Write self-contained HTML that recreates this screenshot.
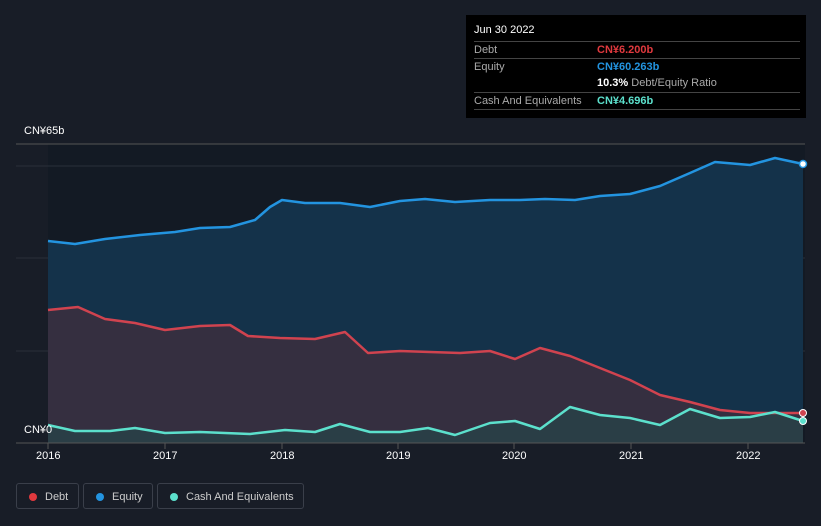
<!DOCTYPE html><html><head><meta charset="utf-8"><style>
body{margin:0;width:821px;height:526px;background:#181d27;font-family:"Liberation Sans",sans-serif;overflow:hidden;position:relative}
.t{position:absolute;font-size:11px;color:#fff}
.tip{position:absolute;left:466px;top:15px;width:340px;height:103px;background:#000;}
.tip .r{position:absolute;left:8px;width:326px;border-top:1px solid #444;height:17px;font-size:11px;color:#aaa;line-height:17px}
.leg{position:absolute;top:483px;height:26px;border:1px solid #3a3f4a;border-radius:3px;color:#ccc;font-size:11px;line-height:26px;box-sizing:border-box}
.leg i{position:absolute;left:12px;top:9px;width:8px;height:8px;border-radius:50%}
</style></head><body>
<svg width="821" height="526" style="position:absolute;left:0;top:0">
<rect x="48" y="144" width="757" height="299" fill="#131a24"/>
<line x1="16" y1="144" x2="805" y2="144" stroke="#555" stroke-width="1"/>
<line x1="16" y1="166" x2="805" y2="166" stroke="#2a303a"/>
<line x1="16" y1="258" x2="805" y2="258" stroke="#2a303a"/>
<line x1="16" y1="351" x2="805" y2="351" stroke="#2a303a"/>
<path d="M48,241 L75,244 105,239 140,235 175,232 200,228 230,227 255,220 270,207 282,200 305,203 340,203 370,207 400,201 425,199 455,202 490,200 520,200 545,199 575,200 600,196 630,194 660,186 690,173 715,162 750,165 775,158 803,164 L803,443 48,443Z" fill="#14324a"/>
<path d="M48,310 L78,307 105,319 135,323 165,330 200,326 230,325 248,336 280,338 315,339 345,332 368,353 400,351 430,352 460,353 490,351 515,359 540,348 570,356 600,368 630,380 660,395 690,402 720,410 750,413 803,413 L803,443 48,443Z" fill="#352f40"/>
<path d="M48,425 L75,431 110,431 135,428 165,433 200,432 250,434 285,430 315,432 340,424 370,432 400,432 428,428 455,435 490,423 515,421 540,429 570,407 600,415 630,418 660,425 690,409 720,418 750,417 775,412 803,421 L803,443 48,443Z" fill="#2a3e46"/>
<path d="M48,241 L75,244 105,239 140,235 175,232 200,228 230,227 255,220 270,207 282,200 305,203 340,203 370,207 400,201 425,199 455,202 490,200 520,200 545,199 575,200 600,196 630,194 660,186 690,173 715,162 750,165 775,158 803,164" fill="none" stroke="#2394e0" stroke-width="2.5" stroke-linejoin="round"/>
<path d="M48,310 L78,307 105,319 135,323 165,330 200,326 230,325 248,336 280,338 315,339 345,332 368,353 400,351 430,352 460,353 490,351 515,359 540,348 570,356 600,368 630,380 660,395 690,402 720,410 750,413 803,413" fill="none" stroke="#d0434f" stroke-width="2.5" stroke-linejoin="round"/>
<path d="M48,425 L75,431 110,431 135,428 165,433 200,432 250,434 285,430 315,432 340,424 370,432 400,432 428,428 455,435 490,423 515,421 540,429 570,407 600,415 630,418 660,425 690,409 720,418 750,417 775,412 803,421" fill="none" stroke="#5ce0cc" stroke-width="2.5" stroke-linejoin="round"/>
<line x1="16" y1="443" x2="805" y2="443" stroke="#555"/>
<g stroke="#555"><line x1="48" y1="443" x2="48" y2="449"/><line x1="165" y1="443" x2="165" y2="449"/><line x1="282" y1="443" x2="282" y2="449"/><line x1="398" y1="443" x2="398" y2="449"/><line x1="514" y1="443" x2="514" y2="449"/><line x1="631" y1="443" x2="631" y2="449"/><line x1="748" y1="443" x2="748" y2="449"/></g>
<circle cx="803" cy="164" r="3.5" fill="#fff" stroke="#2394e0" stroke-width="1.5"/>
<circle cx="803" cy="413" r="3.5" fill="#d0434f" stroke="#fff" stroke-width="1"/>
<circle cx="803" cy="421" r="3.5" fill="#5ce0cc" stroke="#fff" stroke-width="1"/>
</svg>
<div class="t" style="left:24px;top:125px">CN¥65b</div>
<div class="t" style="left:24px;top:424px">CN¥0</div>
<div class="t" style="left:36px;top:450px">2016</div><div class="t" style="left:153px;top:450px">2017</div><div class="t" style="left:270px;top:450px">2018</div><div class="t" style="left:386px;top:450px">2019</div><div class="t" style="left:502px;top:450px">2020</div><div class="t" style="left:619px;top:450px">2021</div><div class="t" style="left:736px;top:450px">2022</div>
<div class="tip">
<div style="position:absolute;left:8px;top:9px;color:#fff;font-size:11px">Jun 30 2022</div>
<div class="r" style="top:26px">Debt<span style="position:absolute;left:123px;color:#e0393e;font-weight:bold">CN¥6.200b</span></div>
<div class="r" style="top:43px">Equity<span style="position:absolute;left:123px;color:#2394e0;font-weight:bold">CN¥60.263b</span></div>
<div class="r" style="top:60px;border:none"><span style="position:absolute;left:123px"><b style="color:#fff">10.3%</b> Debt/Equity Ratio</span></div>
<div class="r" style="top:77px">Cash And Equivalents<span style="position:absolute;left:123px;color:#5ce0cc;font-weight:bold">CN¥4.696b</span></div>
<div class="r" style="top:94px;height:0"></div>
</div>
<div class="leg" style="left:16px;width:63px"><i style="background:#e0393e"></i><span style="position:absolute;left:28px">Debt</span></div>
<div class="leg" style="left:83px;width:70px"><i style="background:#2394e0"></i><span style="position:absolute;left:28px">Equity</span></div>
<div class="leg" style="left:157px;width:147px"><i style="background:#5ce0cc"></i><span style="position:absolute;left:28px">Cash And Equivalents</span></div>
</body></html>
